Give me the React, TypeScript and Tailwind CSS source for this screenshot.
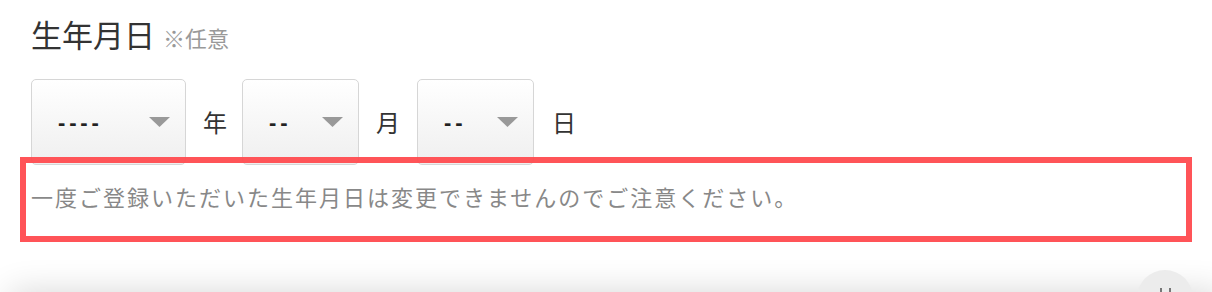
import React from "react";

const Arrow = () => (
	<svg width="21" height="10" viewBox="0 0 21 10" className="shrink-0">
		<path d="M0 0 H21 L10.5 10 Z" fill="#999999" />
	</svg>
);

interface DateSelectProps {
	placeholder: string;
	width: string;
}

// select box styled like the iOS-ish gradient dropdown
const DateSelect = ({ placeholder, width }: DateSelectProps) => (
	<div
		className={`${width} flex h-[86px] items-center justify-between rounded-[5px] border-[1.5px] border-[#d6d6d6] bg-gradient-to-b from-white to-[#efefef] pl-[26px] pr-[15px]`}
	>
		<span className="font-['Liberation_Sans',sans-serif] text-[22px] font-bold tracking-[3.8px] text-[#222]">
			{placeholder}
		</span>
		<Arrow />
	</div>
);

export default function App() {
	return (
		<div className="relative h-[292px] w-[1212px] overflow-hidden bg-white font-['Noto_Sans_CJK_JP',sans-serif]">
			<div className="pl-[31px] pt-[16px]">
				{/* Title */}
				<h2 className="flex items-baseline text-[31px] leading-[36px] text-[#333]">
					生年月日
					<span className="ml-[8px] text-[22px] text-[#999]">※任意</span>
				</h2>

				{/* Year / month / day selects */}
				<div className="mt-[24px] flex items-center text-[24px] text-[#333]">
					<DateSelect placeholder="----" width="w-[155px]" />
					<span className="ml-[17px] mr-[15px]">年</span>
					<DateSelect placeholder="--" width="w-[117px]" />
					<span className="ml-[17px] mr-[17px]">月</span>
					<DateSelect placeholder="--" width="w-[117px]" />
					<span className="mx-[18px]">日</span>
				</div>

				<p className="mt-[19px] text-[22px] leading-[24px] tracking-[2px] text-[#888]">
					一度ご登録いただいた生年月日は変更できませんのでご注意ください。
				</p>
			</div>

			{/* Highlight annotation */}
			<div className="absolute left-[20px] top-[157px] h-[85px] w-[1172px] border-[6px] border-[#ff4b4f]/95"></div>

			{/* Bottom bar shadow */}
			<div className="absolute left-[10px] right-[-10px] top-[292px] h-[40px] bg-white shadow-[0_0_34px_rgba(0,0,0,0.16)]"></div>

			{/* Page top button */}
			<div className="absolute left-[1137px] top-[270px] flex h-[56px] w-[56px] justify-center rounded-full bg-[#ececec] pt-[18px]">
				<div className="flex gap-[7px]">
					<span className="h-[6px] w-[2px] bg-[#777]"></span>
					<span className="h-[6px] w-[2px] bg-[#777]"></span>
				</div>
			</div>
		</div>
	);
}
